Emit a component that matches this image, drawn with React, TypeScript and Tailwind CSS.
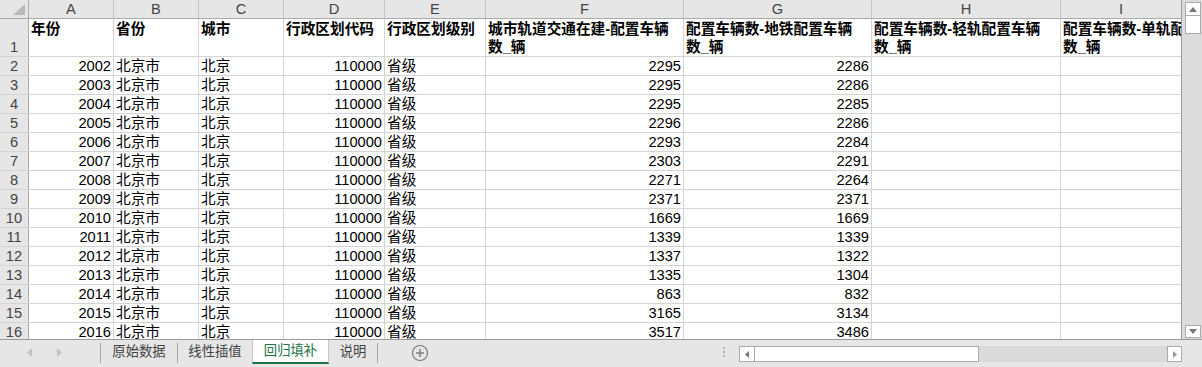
import React from "react";

const colW = [
  "w-[29px]",
  "w-[85px]",
  "w-[85px]",
  "w-[85px]",
  "w-[101px]",
  "w-[101px]",
  "w-[198px]",
  "w-[188px]",
  "w-[189px]",
  "flex-1",
];
const letters = ["A", "B", "C", "D", "E", "F", "G", "H", "I"];
const headers: string[][] = [
  ["年份"],
  ["省份"],
  ["城市"],
  ["行政区划代码"],
  ["行政区划级别"],
  ["城市轨道交通在建-配置车辆", "数_辆"],
  ["配置车辆数-地铁配置车辆", "数_辆"],
  ["配置车辆数-轻轨配置车辆", "数_辆"],
  ["配置车辆数-单轨配置车辆", "数_辆"],
];
const data: [number, number, number][] = [
  [2002, 2295, 2286],
  [2003, 2295, 2286],
  [2004, 2295, 2285],
  [2005, 2296, 2286],
  [2006, 2293, 2284],
  [2007, 2303, 2291],
  [2008, 2271, 2264],
  [2009, 2371, 2371],
  [2010, 1669, 1669],
  [2011, 1339, 1339],
  [2012, 1337, 1322],
  [2013, 1335, 1304],
  [2014, 863, 832],
  [2015, 3165, 3134],
  [2016, 3517, 3486],
];

function Cell({ i, children, right, last }: { i: number; children?: React.ReactNode; right?: boolean; last?: boolean }) {
  return (
    <div
      className={`${colW[i]} shrink-0 h-full border-r border-[#d4d4d4] flex items-end overflow-hidden whitespace-nowrap px-[2px] leading-[18px] ${
        right ? "justify-end" : "justify-start"
      } ${last ? "border-r-0" : ""}`}
    >
      {children}
    </div>
  );
}

export default function App() {
  return (
    <div className="w-[1202px] h-[367px] overflow-hidden bg-white text-[14.67px] text-black font-[family-name:'Liberation_Sans','Noto_Sans_CJK_SC',sans-serif] flex flex-col">
      <div className="flex h-[339px]">
        {/* grid */}
        <div className="w-[1182px] h-full overflow-hidden border-r border-[#9b9b9b] flex flex-col">
          {/* column header */}
          <div className="flex h-[19px] shrink-0 bg-[#e6e6e6] border-b border-[#ababab] text-[#444]">
            <div className={`${colW[0]} shrink-0 h-full border-r border-[#ababab] relative`}>
              <svg className="absolute left-[13px] top-[4px]" width="12" height="11" viewBox="0 0 12 11">
                <polygon points="12,0 12,11 0,11" fill="#b9b9b9" />
              </svg>
            </div>
            {letters.map((l, k) => (
              <div
                key={l}
                className={`${colW[k + 1]} shrink-0 h-full border-r border-[#c6c6c6] flex items-center justify-center leading-[18px] ${
                  k === 8 ? "border-r-0" : ""
                }`}
              >
                {l}
              </div>
            ))}
          </div>
          {/* row 1 */}
          <div className="flex h-[38px] shrink-0 border-b border-[#d4d4d4]">
            <div className={`${colW[0]} shrink-0 h-full bg-[#e6e6e6] border-r border-[#ababab] text-[#444] flex items-end justify-center leading-[18px]`}>
              1
            </div>
            {headers.map((h, k) => (
              <div
                key={k}
                className={`${colW[k + 1]} shrink-0 h-full border-r border-[#d4d4d4] px-[2px] pt-[1px] font-bold leading-[18px] overflow-hidden ${
                  k === 8 ? "border-r-0" : ""
                }`}
              >
                {h.map((line, j) => (
                  <div key={j} className="whitespace-nowrap">
                    {line}
                  </div>
                ))}
              </div>
            ))}
          </div>
          {data.map((r, idx) => (
            <div key={r[0]} className="flex h-[19px] shrink-0 border-b border-[#d4d4d4]">
              <div className={`${colW[0]} shrink-0 h-full bg-[#e6e6e6] border-r border-[#ababab] text-[#444] flex items-end justify-center leading-[18px]`}>
                {idx + 2}
              </div>
              <Cell i={1} right>
                {r[0]}
              </Cell>
              <Cell i={2}>北京市</Cell>
              <Cell i={3}>北京</Cell>
              <Cell i={4} right>
                110000
              </Cell>
              <Cell i={5}>省级</Cell>
              <Cell i={6} right>
                {r[1]}
              </Cell>
              <Cell i={7} right>
                {r[2]}
              </Cell>
              <Cell i={8} />
              <Cell i={9} last />
            </div>
          ))}
        </div>
        {/* vertical scrollbar */}
        <div className="w-[20px] h-full bg-[#dcdcdc] flex flex-col items-center pt-[2px] pl-[1px]">
          <div className="w-[16px] h-[14px] bg-white border border-[#ababab] flex items-center justify-center">
            <svg width="8" height="5" viewBox="0 0 8 5">
              <polygon points="4,0 8,5 0,5" fill="#777" />
            </svg>
          </div>
          <div className="w-[16px] h-[18px] bg-white border border-[#ababab] border-t-0" />
          <div className="flex-1" />
          <div className="w-[16px] h-[13px] bg-white border border-[#ababab] mb-[1px] flex items-center justify-center">
            <svg width="8" height="5" viewBox="0 0 8 5">
              <polygon points="0,0 8,0 4,5" fill="#777" />
            </svg>
          </div>
        </div>
      </div>
      {/* tab bar */}
      <div className="h-[28px] border-t border-[#9b9b9b] bg-[#e6e6e6] flex items-start text-[13.33px] text-[#444]">
        <div className="w-[100px] h-[24px] flex items-center pl-[27px] gap-[25px]">
          <svg width="5" height="9" viewBox="0 0 5 9">
            <polygon points="5,0 5,9 0,4.5" fill="#c4c4c4" />
          </svg>
          <svg width="5" height="9" viewBox="0 0 5 9">
            <polygon points="0,0 0,9 5,4.5" fill="#c4c4c4" />
          </svg>
        </div>
        <div className="w-px h-[20px] mt-[3px] bg-[#a6a6a6]" />
        <div className="w-[76px] h-[24px] flex items-center justify-center">原始数据</div>
        <div className="w-px h-[20px] mt-[3px] bg-[#a6a6a6]" />
        <div className="w-[74px] h-[24px] flex items-center justify-center">线性插值</div>
        <div className="w-[77px] h-[24px] bg-white border-l border-r border-[#c6c6c6] border-b-2 border-b-[#217346] text-[#217346] flex items-center justify-center">
          回归填补
        </div>
        <div className="w-[48px] h-[24px] flex items-center justify-center">说明</div>
        <div className="w-px h-[20px] mt-[3px] bg-[#a6a6a6]" />
        <div className="ml-[33px] mt-[4px]">
          <svg width="18" height="18" viewBox="0 0 18 18">
            <circle cx="9" cy="9" r="7.5" fill="none" stroke="#7a7a7a" strokeWidth="1.2" />
            <line x1="9" y1="5" x2="9" y2="13" stroke="#7a7a7a" strokeWidth="1.4" />
            <line x1="5" y1="9" x2="13" y2="9" stroke="#7a7a7a" strokeWidth="1.4" />
          </svg>
        </div>
        <div className="ml-[294px] mt-[7px] flex flex-col gap-[2px]">
          <div className="w-[2px] h-[2px] bg-[#b0b0b0]" />
          <div className="w-[2px] h-[2px] bg-[#b0b0b0]" />
          <div className="w-[2px] h-[2px] bg-[#b0b0b0]" />
        </div>
        <div className="ml-[14px] mt-[6px] flex h-[16px] w-[443px] bg-[#dadada]">
          <div className="w-[16px] h-full bg-white border border-[#ababab] flex items-center justify-center">
            <svg width="4" height="7" viewBox="0 0 4 7">
              <polygon points="4,0 4,7 0,3.5" fill="#777" />
            </svg>
          </div>
          <div className="w-[224px] h-full bg-white border border-l-0 border-[#ababab]" />
          <div className="flex-1" />
          <div className="w-[15px] h-full bg-white border border-[#ababab] flex items-center justify-center">
            <svg width="4" height="7" viewBox="0 0 4 7">
              <polygon points="0,0 0,7 4,3.5" fill="#999" />
            </svg>
          </div>
        </div>
      </div>
    </div>
  );
}
